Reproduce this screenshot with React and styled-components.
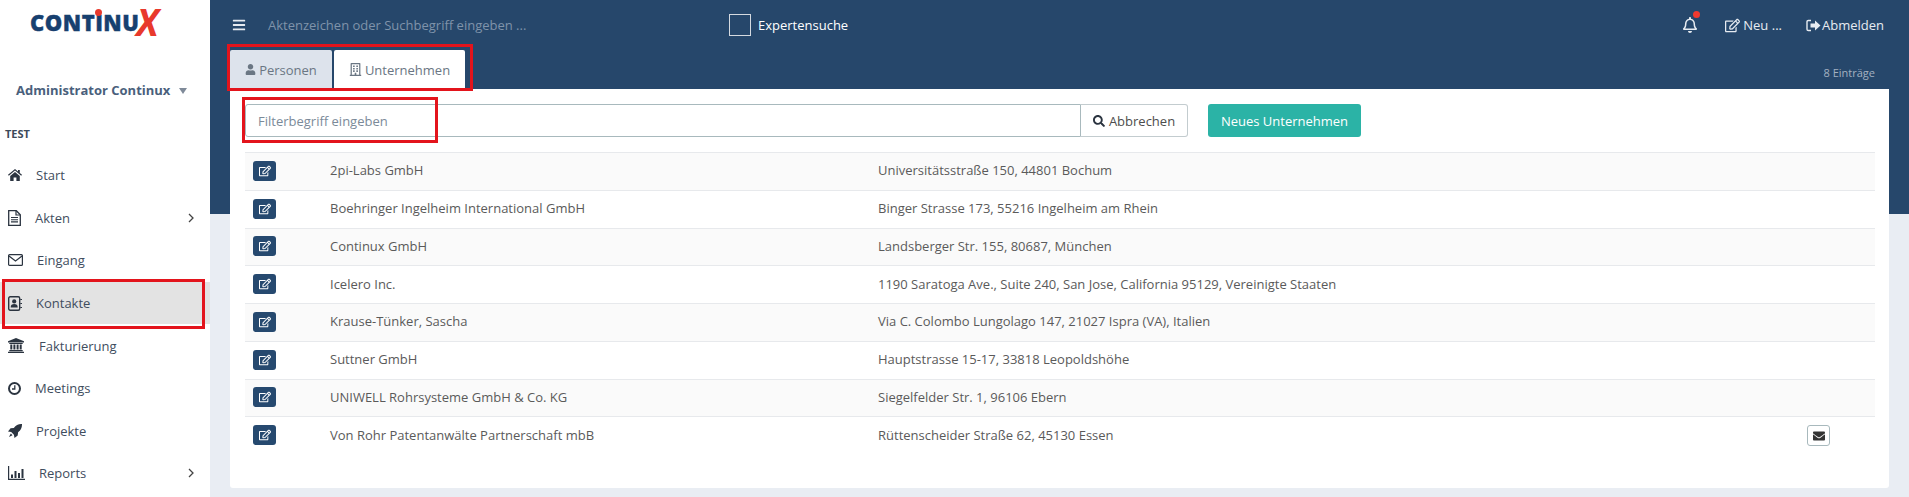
import React from "react";
import styled, { createGlobalStyle } from "styled-components";
import { FaBars, FaUser, FaRegBuilding, FaSearch, FaEnvelope, FaRegEdit, FaRegBell } from "react-icons/fa";

const navy = "#26476b";

const GlobalStyle = createGlobalStyle`
  html, body { margin: 0; padding: 0; height: 100%; overflow: hidden; }
  body { font-family: "Open Sans", "Noto Sans", sans-serif; font-size: 13px; color: #4d4d4d; background: #fff; }
  * { box-sizing: border-box; }
`;

const Page = styled.div`
  display: flex;
  width: 1909px;
  height: 497px;
`;

// left column
const Sidebar = styled.aside`
  width: 210px;
  flex: none;
  background: #fff;
`;

const LogoBox = styled.div`
  height: 66px;
  padding: 4px 0 0 30px;
  display: flex;
  align-items: flex-start;
  white-space: nowrap;
`;

const LogoText = styled.span`
  font-family: "Open Sans", sans-serif;
  font-weight: 800;
  font-size: 22px;
  line-height: 36px;
  letter-spacing: 0.5px;
  -webkit-text-stroke: 0.4px #17406f;
  color: #17406f;
`;

// the dot above the I of the logo
const LogoI = styled.span`
  position: relative;
  &::before {
    content: "";
    position: absolute;
    left: 50%;
    top: 2px;
    width: 7px;
    height: 7px;
    margin-left: -4px;
    border-radius: 50%;
    background: #e8392c;
  }
`;

const LogoX = styled.span`
  font-family: "Open Sans", sans-serif;
  font-weight: 700;
  font-style: italic;
  font-size: 37px;
  line-height: 44px;
  margin: -4px 0 0 -3px;
  color: #e8392c;
`;

const User = styled.div`
  height: 48px;
  padding: 0 0 0 16px;
  display: flex;
  align-items: center;
  gap: 9px;
  font-weight: 700;
  font-size: 13px;
  color: #4a5f7c;
`;

const Caret = styled.span`
  width: 0;
  height: 0;
  margin-top: 2px;
  border-left: 4px solid transparent;
  border-right: 4px solid transparent;
  border-top: 6px solid #7f8a99;
`;

const SectionTitle = styled.div`
  margin-top: 8px;
  padding-left: 5px;
  height: 24px;
  line-height: 24px;
  font-size: 11px;
  font-weight: 700;
  color: #3c4a5a;
`;

const NavList = styled.nav`
  display: flex;
  flex-direction: column;
  margin-top: 8px;
`;

const NavItem = styled.div`
  position: relative;
  height: 42.6px;
  display: flex;
  align-items: center;
  padding: 0 16px 0 8px;
  font-size: 13px;
  color: #3f4d5e;
  background: ${(p) => (p.$active ? "#e3e3e3" : "transparent")};
`;

const NavIcon = styled.span`
  display: flex;
  width: ${(p) => p.$w}px;
  flex: none;
  color: #2b3440;
`;

const NavArrow = styled.svg`
  margin-left: auto;
  width: 6px;
  height: 10px;
  color: #444;
`;

// right part
const Main = styled.main`
  flex: 1;
  min-width: 0;
  display: flex;
  flex-direction: column;
  background: linear-gradient(${navy} 0, ${navy} 214px, #e9edf3 214px);
`;

const Topbar = styled.header`
  height: 50px;
  display: flex;
  align-items: center;
  padding: 0 25px 0 22px;
  color: #e6ebf1;
`;

const SearchHint = styled.div`
  width: 461px;
  margin-left: 22px;
  font-size: 13px;
  color: #7f93aa;
`;

const CheckBox = styled.span`
  width: 22px;
  height: 22px;
  border: 1px solid #d5dae0;
  margin-right: 7px;
`;

const CheckLabel = styled.span`
  color: #fff;
  font-size: 13px;
`;

const TopActions = styled.div`
  margin-left: auto;
  display: flex;
  align-items: center;
  font-size: 13px;
`;

const Bell = styled.span`
  position: relative;
  display: flex;
  font-size: 16px;
  margin-right: 27px;
`;

const BellDot = styled.span`
  position: absolute;
  top: -6px;
  right: -2px;
  width: 7px;
  height: 7px;
  border-radius: 50%;
  background: #f0392f;
`;

const TopLink = styled.span`
  display: flex;
  align-items: center;
  gap: ${(p) => p.$gap}px;
  margin-right: ${(p) => p.$mr || 0}px;
`;

const TabRow = styled.div`
  position: relative;
  height: 39px;
  margin: 0 20px;
  display: flex;
  gap: 2px;
`;

const Tab = styled.div`
  width: ${(p) => p.$w}px;
  display: flex;
  align-items: center;
  justify-content: center;
  gap: 3px;
  font-size: 13px;
  color: #6a7683;
  background: ${(p) => (p.$active ? "#fff" : "#dde3ec")};
  border-radius: 2px 2px 0 0;
`;

const Count = styled.div`
  margin-left: auto;
  align-self: center;
  margin-top: 5px;
  margin-right: 14px;
  font-size: 11px;
  color: #a3b1c1;
`;

const Card = styled.section`
  margin: 0 20px;
  height: 399px;
  background: #fff;
  border-radius: 0 0 3px 3px;
  padding: 15px 15px 0;
`;

const FilterRow = styled.div`
  position: relative;
  display: flex;
  height: 33px;
  margin-bottom: 15px;
`;

const FilterInput = styled.div`
  width: 836px;
  border: 1px solid #a8b9bd;
  border-radius: 3px 0 0 3px;
  padding-left: 12px;
  display: flex;
  align-items: center;
  font-size: 13px;
  color: #7b8a99;
`;

const CancelButton = styled.div`
  width: 107px;
  border: 1px solid #c3cccf;
  border-left: none;
  border-radius: 0 3px 3px 0;
  display: flex;
  align-items: center;
  justify-content: center;
  gap: 4px;
  font-size: 13px;
  color: #4d4d4d;
`;

const NewButton = styled.div`
  margin-left: 20px;
  width: 153px;
  border-radius: 3px;
  background: #2bb3a6;
  color: #fff;
  display: flex;
  align-items: center;
  justify-content: center;
  font-size: 13px;
`;

const Row = styled.div`
  height: 37.75px;
  margin-right: -1px;
  display: grid;
  grid-template-columns: 85px 548px 1fr 68px;
  align-items: center;
  border-top: 1px solid #e7e9ec;
  background: ${(p) => (p.$odd ? "#fafafa" : "#fff")};
  font-size: 13px;
  color: #5a5a5a;
`;

const RowText = styled.span`
  margin-top: -2px;
`;

const EditButton = styled.span`
  width: 23px;
  height: 20px;
  margin-left: 8px;
  margin-top: -1px;
  border-radius: 3px;
  background: #26496f;
  color: #fff;
  display: flex;
  align-items: center;
  justify-content: center;
  font-size: 12px;
`;

const MailButton = styled.span`
  width: 23px;
  height: 21px;
  border: 1px solid #a8b9bd;
  border-radius: 3px;
  display: flex;
  align-items: center;
  justify-content: center;
  font-size: 12px;
  color: #333;
`;

// the red marks somebody drew on the screenshot
const Mark = styled.div`
  position: absolute;
  left: ${(p) => p.$l}px;
  top: ${(p) => p.$t}px;
  width: ${(p) => p.$w}px;
  height: ${(p) => p.$h}px;
  border: 3px solid #e3141c;
  pointer-events: none;
`;

const HomeIcon = () => (
  <svg width="14" height="12" viewBox="0 0 14 12" fill="currentColor">
    <path d="M7 0l3 2.400V1h1.800v2.900L14 5.800l-.8.9L7 1.600.8 6.700 0 5.800z" />
    <path d="M7 2.900l4.800 4V12H8.400V8.500H5.600V12H2.200V6.900z" />
  </svg>
);

const FileIcon = () => (
  <svg width="13" height="16" viewBox="0 0 13 16" fill="none" stroke="currentColor">
    <path d="M.7.700h7.600l4 4v10.600H.7z" strokeWidth="1.300" />
    <path d="M8 1v4h4" strokeWidth="1.200" />
    <path d="M3 7.500h7M3 9.700h7M3 11.900h7" strokeWidth="1.100" />
  </svg>
);

const EnvelopeIcon = () => (
  <svg width="15" height="12" viewBox="0 0 15 12" fill="none" stroke="currentColor">
    <rect x=".6" y=".6" width="13.800" height="10.800" rx="1" strokeWidth="1.200" />
    <path d="M1 2l6.500 5L14 2" strokeWidth="1.200" />
  </svg>
);

const ContactBookIcon = () => (
  <svg width="14" height="15" viewBox="0 0 14 15" fill="none">
    <rect x=".7" y=".7" width="11" height="13.600" rx="1.500" stroke="currentColor" strokeWidth="1.400" />
    <circle cx="6.200" cy="5.400" r="2.100" fill="currentColor" />
    <path d="M2.700 11.500c0-2.600 1.300-3.500 3.500-3.500s3.500.9 3.500 3.500z" fill="currentColor" />
    <path d="M12.300 3.500H14M12.300 7.500H14M12.300 11.500H14" stroke="currentColor" strokeWidth="1.200" />
  </svg>
);

const BankIcon = () => (
  <svg width="16" height="15" viewBox="0 0 16 15" fill="currentColor">
    <path d="M8 0l8 3.200V4.400H0V3.200z" />
    <path d="M1.300 5h13.400v.9H1.300zM2.300 6.500h2v5h-2zM5.400 6.500h2v5h-2zM8.600 6.500h2v5h-2zM11.700 6.500h2v5h-2zM1.300 12h13.400v1.200H1.300zM0 13.700h16V15H0z" />
  </svg>
);

const ClockIcon = () => (
  <svg width="13" height="13" viewBox="0 0 13 13" fill="none" stroke="currentColor">
    <circle cx="6.500" cy="6.500" r="5.500" strokeWidth="2" />
    <path d="M6.800 3.200v3.800H4" strokeWidth="1.300" />
  </svg>
);

const RocketIcon = () => (
  <svg width="14" height="14" viewBox="0 0 14 14" fill="currentColor">
    <path d="M14 0c.1 3.400-1.100 6.100-3.900 8.200l-.4 3.200L6.500 14l-.6-3.200-2.700-2.700L0 7.500l2.600-3.200 3.200-.4C7.900 1.100 10.600-.1 14 0z" />
    <path d="M2.800 9.500l1.700 1.700L1 13z" />
  </svg>
);

const BarsIcon = () => (
  <svg width="17" height="14" viewBox="0 0 17 14" fill="currentColor">
    <path d="M0 0h1.200v12.800H17V14H0z" />
    <path d="M3 8.500h2v3.500H3zM6.500 5h2v7h-2zM10 7h2v5h-2zM13.500 3h2v9h-2z" />
  </svg>
);

const LogoutIcon = () => (
  <svg width="15" height="13" viewBox="0 0 15 13" fill="none">
    <path d="M5 1.500H2.300C1.500 1.500 1 2 1 2.800v7.400c0 .8.500 1.300 1.300 1.300H5" stroke="currentColor" strokeWidth="1.400" />
    <path d="M4.500 4.500h4.500V1.500l5.500 5-5.500 5v-3H4.500z" fill="currentColor" />
  </svg>
);

const navItems = [
  { label: "Start", icon: <HomeIcon />, w: 28 },
  { label: "Akten", icon: <FileIcon />, w: 27, arrow: true },
  { label: "Eingang", icon: <EnvelopeIcon />, w: 29 },
  { label: "Kontakte", icon: <ContactBookIcon />, w: 28, active: true },
  { label: "Fakturierung", icon: <BankIcon />, w: 31 },
  { label: "Meetings", icon: <ClockIcon />, w: 27 },
  { label: "Projekte", icon: <RocketIcon />, w: 28 },
  { label: "Reports", icon: <BarsIcon />, w: 31, arrow: true },
];

const companies = [
  ["2pi-Labs GmbH", "Universitätsstraße 150, 44801 Bochum"],
  ["Boehringer Ingelheim International GmbH", "Binger Strasse 173, 55216 Ingelheim am Rhein"],
  ["Continux GmbH", "Landsberger Str. 155, 80687, München"],
  ["Icelero Inc.", "1190 Saratoga Ave., Suite 240, San Jose, California 95129, Vereinigte Staaten"],
  ["Krause-Tünker, Sascha", "Via C. Colombo Lungolago 147, 21027 Ispra (VA), Italien"],
  ["Suttner GmbH", "Hauptstrasse 15-17, 33818 Leopoldshöhe"],
  ["UNIWELL Rohrsysteme GmbH & Co. KG", "Siegelfelder Str. 1, 96106 Ebern"],
  ["Von Rohr Patentanwälte Partnerschaft mbB", "Rüttenscheider Straße 62, 45130 Essen", true],
];

const App = () => {
  return (
    <Page>
      <GlobalStyle />
      <Sidebar>
        <LogoBox>
          <LogoText>
            CONT<LogoI>I</LogoI>NU
          </LogoText>
          <LogoX>X</LogoX>
        </LogoBox>
        <User>
          Administrator Continux <Caret />
        </User>
        <SectionTitle>TEST</SectionTitle>
        <NavList>
          {navItems.map((item) => (
            <NavItem key={item.label} $active={item.active}>
              <NavIcon $w={item.w}>{item.icon}</NavIcon>
              {item.label}
              {item.arrow && (
                <NavArrow viewBox="0 0 6 10" fill="none" stroke="currentColor" strokeWidth="1.300">
                  <path d="M1 1l4 4-4 4" />
                </NavArrow>
              )}
              {item.active && <Mark $l={2} $t={-3} $w={203} $h={50} />}
            </NavItem>
          ))}
        </NavList>
      </Sidebar>
      <Main>
        <Topbar>
          <FaBars size={14} />
          <SearchHint>Aktenzeichen oder Suchbegriff eingeben ...</SearchHint>
          <CheckBox />
          <CheckLabel>Expertensuche</CheckLabel>
          <TopActions>
            <Bell>
              <FaRegBell />
              <BellDot />
            </Bell>
            <TopLink $gap={3} $mr={24}>
              <FaRegEdit size={15} /> Neu ...
            </TopLink>
            <TopLink $gap={1}>
              <LogoutIcon /> Abmelden
            </TopLink>
          </TopActions>
        </Topbar>
        <TabRow>
          <Tab $w={102}>
            <FaUser size={11} /> Personen
          </Tab>
          <Tab $w={131} $active>
            <FaRegBuilding size={13} /> Unternehmen
          </Tab>
          <Count>8 Einträge</Count>
          <Mark $l={-3} $t={-6} $w={246} $h={47} />
        </TabRow>
        <Card>
          <FilterRow>
            <FilterInput>Filterbegriff eingeben</FilterInput>
            <CancelButton>
              <FaSearch size={12} color="#2b3440" /> Abbrechen
            </CancelButton>
            <NewButton>Neues Unternehmen</NewButton>
            <Mark $l={-3} $t={-7} $w={196} $h={46} />
          </FilterRow>
          {companies.map(([name, address, mail], i) => (
            <Row key={name} $odd={i % 2 === 0}>
              <EditButton>
                <FaRegEdit />
              </EditButton>
              <RowText>{name}</RowText>
              <RowText>{address}</RowText>
              <span>
                {mail && (
                  <MailButton>
                    <FaEnvelope />
                  </MailButton>
                )}
              </span>
            </Row>
          ))}
        </Card>
      </Main>
    </Page>
  );
};

export default App;
